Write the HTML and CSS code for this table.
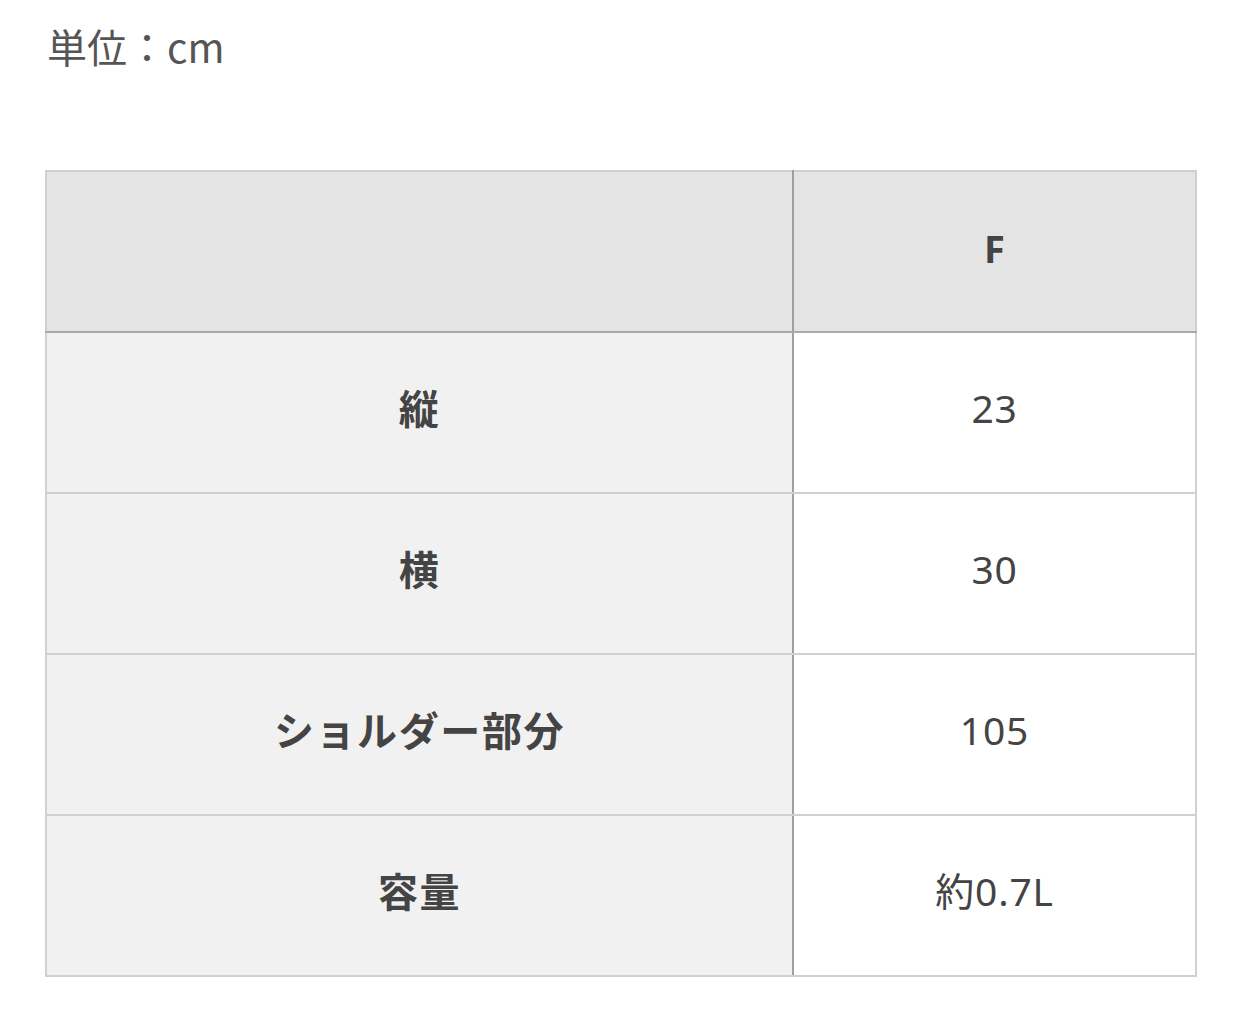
FILE: index.html
```html
<!DOCTYPE html>
<html lang="ja">
<head>
<meta charset="utf-8">
<link rel="stylesheet" href="styles.css">
</head>
<body>
<p class="unit">単位：cm</p>
<table class="size">
  <colgroup><col class="c-label"><col class="c-value"></colgroup>
  <thead>
    <tr><th class="blank"></th><th class="head">F</th></tr>
  </thead>
  <tbody>
    <tr><th class="label">縦</th><td class="value">23</td></tr>
    <tr><th class="label">横</th><td class="value">30</td></tr>
    <tr><th class="label">ショルダー部分</th><td class="value">105</td></tr>
    <tr><th class="label">容量</th><td class="value">約0.7L</td></tr>
  </tbody>
</table>
</body>
</html>
```

FILE: styles.css
```css
html, body {
  margin: 0;
  padding: 0;
  background: #fff;
}
body {
  padding: 0 46px 0 45px;
  font-family: "Noto Sans CJK JP", "Noto Sans", sans-serif;
  color: #444;
}
.unit {
  margin: 24px 0 0 2px;
  font-size: 40px;
  line-height: 44px;
  color: #555;
}
.size {
  margin-top: 102px;
  width: 1150px;
  border-collapse: collapse;
  table-layout: fixed;
}
.c-label { width: 747px; }
.c-value { width: 403px; }
.size th, .size td {
  height: 147px;
  padding: 0 0 12px 0;
  text-align: center;
  vertical-align: middle;
  font-size: 40px;
  line-height: 1.2;
  border: 2px solid #d0d0d0;
}
.size thead th {
  background: #e4e4e4;
  border-bottom-color: #a9a9a9;
}
.size .head {
  font-family: "Noto Sans", "Noto Sans CJK JP", sans-serif;
  font-size: 38px;
  font-weight: 700;
  color: #444;
  padding-bottom: 6px;
}
.size .label {
  background: #f1f1f1;
  font-weight: 700;
  letter-spacing: 0.04em;
  color: #444;
}
.size .value {
  background: #fff;
  font-family: "Noto Sans", "Noto Sans CJK JP", sans-serif;
  font-size: 39px;
  font-weight: 400;
  letter-spacing: 0.02em;
  color: #444;
  padding-bottom: 8px;
}
.size .blank, .size .label {
  border-right-color: #9f9f9f;
}
```
